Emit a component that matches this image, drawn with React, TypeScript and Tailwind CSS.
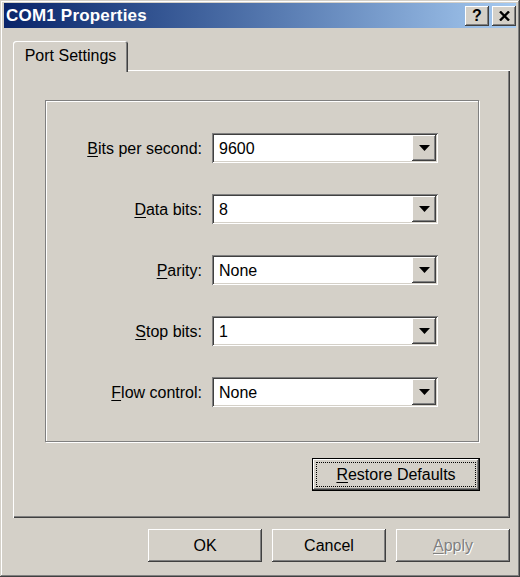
import React from "react";

const raised =
  "shadow-[inset_-1px_-1px_0_#404040,inset_1px_1px_0_#ffffff,inset_-2px_-2px_0_#808080,inset_2px_2px_0_#d4d0c8]";

function Arrow() {
  return (
    <svg width="11" height="6" viewBox="0 0 11 6" className="block">
      <polygon points="0,0 11,0 5.5,6" fill="#000" />
    </svg>
  );
}

function Combo({ value }: { value: string }) {
  return (
    <div className="w-[226px] h-[30px] bg-white flex items-center p-[2px] shadow-[inset_1px_1px_0_#808080,inset_-1px_-1px_0_#ffffff,inset_2px_2px_0_#404040,inset_-2px_-2px_0_#d4d0c8]">
      <div className="flex-1 pl-[5px] pt-[2px] text-[16px] text-black leading-none">{value}</div>
      <div
        className={`w-[24px] h-[26px] bg-[#d4d0c8] flex items-center justify-center ${raised}`}
      >
        <Arrow />
      </div>
    </div>
  );
}

function Row({ label, u, value }: { label: string; u: string; value: string }) {
  const rest = label.slice(u.length);
  return (
    <div className="flex items-center h-[30px]">
      <div className="w-[157px] text-right text-[16px] text-black leading-none pr-[1px] pt-[2px]">
        <span className="underline underline-offset-[2px]">{u}</span>
        {rest}
      </div>
      <div className="ml-[9px]">
        <Combo value={value} />
      </div>
    </div>
  );
}

function Btn({
  children,
  disabled,
}: {
  children: React.ReactNode;
  disabled?: boolean;
}) {
  return (
    <div
      className={`w-[114px] h-[33px] bg-[#d4d0c8] flex items-center justify-center text-[16px] leading-none ${raised} ${
        disabled ? "text-[#808080] [text-shadow:1px_1px_0_#ffffff]" : "text-black"
      }`}
    >
      {children}
    </div>
  );
}

export default function App() {
  return (
    <div className="w-[520px] h-[577px] bg-[#d4d0c8] flex flex-col pt-[3px] pl-[4px] pr-[4px] pb-[4px] font-['Liberation_Sans','Arial',sans-serif] shadow-[inset_-1px_-1px_0_#404040,inset_1px_1px_0_#d4d0c8,inset_-2px_-2px_0_#808080,inset_2px_2px_0_#ffffff] overflow-hidden">
      {/* Title bar */}
      <div className="h-[25px] flex items-center bg-gradient-to-r from-[#0a246a] to-[#a6caf0] pl-[2px] pr-[0px]">
        <div className="flex-1 text-white font-bold text-[17px] leading-none tracking-[0.2px]">
          COM1 Properties
        </div>
        <div className="flex gap-[3px] items-center">
          <div
            className={`w-[24px] h-[20px] bg-[#d4d0c8] flex items-center justify-center ${raised}`}
          >
            <span className="font-bold text-[16px] leading-none text-black">?</span>
          </div>
          <div
            className={`w-[24px] h-[20px] bg-[#d4d0c8] flex items-center justify-center ${raised}`}
          >
            <svg width="11" height="10" viewBox="0 0 11 10">
              <path d="M1 0.5 L10 9.5 M10 0.5 L1 9.5" stroke="#000" strokeWidth="2.4" />
            </svg>
          </div>
        </div>
      </div>

      {/* Body */}
      <div className="flex-1 flex flex-col pl-[9px] pr-[6px] pt-[13px]">
        {/* Tabs */}
        <div className="h-[29px] flex items-end relative z-10">
          <div className="w-[115px] h-[31px] mb-[-2px] bg-[#d4d0c8] rounded-t-[3px] flex items-start justify-center pt-[7px] text-[16px] text-black leading-none shadow-[inset_1px_1px_0_#ffffff,inset_-1px_0_0_#404040,inset_-2px_0_0_#808080]">
            Port Settings
          </div>
        </div>

        {/* Panel */}
        <div className="h-[448px] flex flex-col pl-[32px] pr-[30px] pt-[30px] shadow-[inset_1px_1px_0_#ffffff,inset_-1px_-1px_0_#404040,inset_-2px_-2px_0_#808080]">
          <div className="w-[434px] h-[342px] border border-[#808080] shadow-[1px_1px_0_#ffffff,inset_1px_1px_0_#ffffff] flex flex-col pt-[32px] gap-[31px]">
            <Row label="Bits per second:" u="B" value="9600" />
            <Row label="Data bits:" u="D" value="8" />
            <Row label="Parity:" u="P" value="None" />
            <Row label="Stop bits:" u="S" value="1" />
            <Row label="Flow control:" u="F" value="None" />
          </div>
          <div className="flex justify-end mt-[16px] pr-[0px]">
            <div className="w-[168px] h-[33px] border border-black bg-[#d4d0c8]">
              <div className={`w-full h-full p-[3px] ${raised}`}>
                <div className="w-full h-full border border-dotted border-black flex items-center justify-center text-[16px] leading-none text-black">
                  <span>
                    <span className="underline underline-offset-[2px]">R</span>estore Defaults
                  </span>
                </div>
              </div>
            </div>
          </div>
        </div>

        {/* Bottom buttons */}
        <div className="flex justify-end gap-[10px] mt-[11px]">
          <Btn>OK</Btn>
          <Btn>Cancel</Btn>
          <Btn disabled>
            <span>
              <span className="underline underline-offset-[2px]">A</span>pply
            </span>
          </Btn>
        </div>
      </div>
    </div>
  );
}
